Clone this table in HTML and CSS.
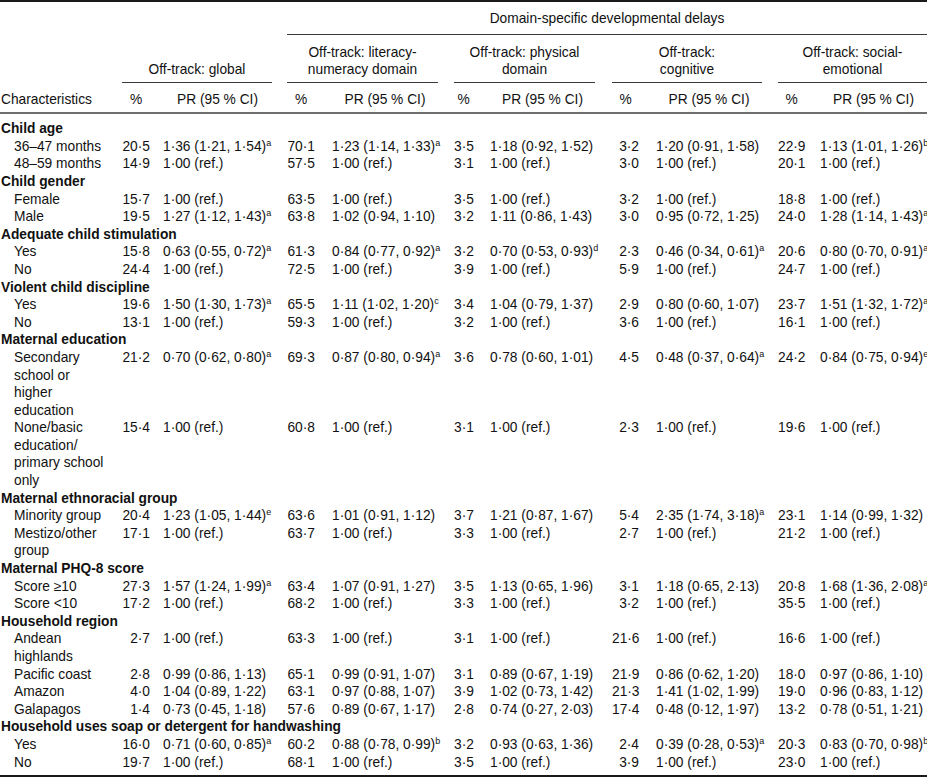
FILE: index.html
```html
<!DOCTYPE html>
<html lang="en">
<head>
<meta charset="utf-8">
<title>Developmental delays table</title>
<link rel="stylesheet" href="styles.css">
</head>
<body>
<table class="data">
  <colgroup>
    <col class="w-char">
    <col class="w-pct">
    <col class="w-pr-g">
    <col class="w-pct-l">
    <col class="w-pr">
    <col class="w-pct-p">
    <col class="w-pr">
    <col class="w-pct">
    <col class="w-pr">
    <col class="w-pct">
    <col class="w-pr-s">
  </colgroup>
  <thead>
    <tr class="row-span">
      <th colspan="3"></th>
      <th colspan="8" class="span-title">Domain-specific developmental delays</th>
    </tr>
    <tr class="row-groups">
      <th></th>
      <th colspan="2" class="grp grp-g"><div class="grp-in">Off-track: global</div></th>
      <th colspan="2" class="grp grp-l"><div class="grp-in">Off-track: literacy-<br>numeracy domain</div></th>
      <th colspan="2" class="grp grp-p"><div class="grp-in">Off-track: physical<br>domain</div></th>
      <th colspan="2" class="grp grp-c"><div class="grp-in">Off-track:<br>cognitive</div></th>
      <th colspan="2" class="grp grp-s"><div class="grp-in">Off-track: social-<br>emotional</div></th>
    </tr>
    <tr class="row-cols">
      <th>Characteristics</th>
      <th>%</th><th>PR (95 % CI)</th>
      <th>%</th><th>PR (95 % CI)</th>
      <th>%</th><th>PR (95 % CI)</th>
      <th>%</th><th>PR (95 % CI)</th>
      <th>%</th><th>PR (95 % CI)</th>
    </tr>
  </thead>
  <tbody>
    <tr class="cat first"><td colspan="11">Child age</td></tr>
    <tr><td>36–47 months</td><td>20·5</td><td>1·36 (1·21, 1·54)<sup>a</sup></td><td>70·1</td><td>1·23 (1·14, 1·33)<sup>a</sup></td><td>3·5</td><td>1·18 (0·92, 1·52)</td><td>3·2</td><td>1·20 (0·91, 1·58)</td><td>22·9</td><td>1·13 (1·01, 1·26)<sup>b</sup></td></tr>
    <tr><td>48–59 months</td><td>14·9</td><td>1·00 (ref.)</td><td>57·5</td><td>1·00 (ref.)</td><td>3·1</td><td>1·00 (ref.)</td><td>3·0</td><td>1·00 (ref.)</td><td>20·1</td><td>1·00 (ref.)</td></tr>
    <tr class="cat"><td colspan="11">Child gender</td></tr>
    <tr><td>Female</td><td>15·7</td><td>1·00 (ref.)</td><td>63·5</td><td>1·00 (ref.)</td><td>3·5</td><td>1·00 (ref.)</td><td>3·2</td><td>1·00 (ref.)</td><td>18·8</td><td>1·00 (ref.)</td></tr>
    <tr><td>Male</td><td>19·5</td><td>1·27 (1·12, 1·43)<sup>a</sup></td><td>63·8</td><td>1·02 (0·94, 1·10)</td><td>3·2</td><td>1·11 (0·86, 1·43)</td><td>3·0</td><td>0·95 (0·72, 1·25)</td><td>24·0</td><td>1·28 (1·14, 1·43)<sup>a</sup></td></tr>
    <tr class="cat"><td colspan="11">Adequate child stimulation</td></tr>
    <tr><td>Yes</td><td>15·8</td><td>0·63 (0·55, 0·72)<sup>a</sup></td><td>61·3</td><td>0·84 (0·77, 0·92)<sup>a</sup></td><td>3·2</td><td>0·70 (0·53, 0·93)<sup>d</sup></td><td>2·3</td><td>0·46 (0·34, 0·61)<sup>a</sup></td><td>20·6</td><td>0·80 (0·70, 0·91)<sup>a</sup></td></tr>
    <tr><td>No</td><td>24·4</td><td>1·00 (ref.)</td><td>72·5</td><td>1·00 (ref.)</td><td>3·9</td><td>1·00 (ref.)</td><td>5·9</td><td>1·00 (ref.)</td><td>24·7</td><td>1·00 (ref.)</td></tr>
    <tr class="cat"><td colspan="11">Violent child discipline</td></tr>
    <tr><td>Yes</td><td>19·6</td><td>1·50 (1·30, 1·73)<sup>a</sup></td><td>65·5</td><td>1·11 (1·02, 1·20)<sup>c</sup></td><td>3·4</td><td>1·04 (0·79, 1·37)</td><td>2·9</td><td>0·80 (0·60, 1·07)</td><td>23·7</td><td>1·51 (1·32, 1·72)<sup>a</sup></td></tr>
    <tr><td>No</td><td>13·1</td><td>1·00 (ref.)</td><td>59·3</td><td>1·00 (ref.)</td><td>3·2</td><td>1·00 (ref.)</td><td>3·6</td><td>1·00 (ref.)</td><td>16·1</td><td>1·00 (ref.)</td></tr>
    <tr class="cat"><td colspan="11">Maternal education</td></tr>
    <tr><td>Secondary school or higher education</td><td>21·2</td><td>0·70 (0·62, 0·80)<sup>a</sup></td><td>69·3</td><td>0·87 (0·80, 0·94)<sup>a</sup></td><td>3·6</td><td>0·78 (0·60, 1·01)</td><td>4·5</td><td>0·48 (0·37, 0·64)<sup>a</sup></td><td>24·2</td><td>0·84 (0·75, 0·94)<sup>e</sup></td></tr>
    <tr><td>None/basic education/<wbr>primary school only</td><td>15·4</td><td>1·00 (ref.)</td><td>60·8</td><td>1·00 (ref.)</td><td>3·1</td><td>1·00 (ref.)</td><td>2·3</td><td>1·00 (ref.)</td><td>19·6</td><td>1·00 (ref.)</td></tr>
    <tr class="cat"><td colspan="11">Maternal ethnoracial group</td></tr>
    <tr><td>Minority group</td><td>20·4</td><td>1·23 (1·05, 1·44)<sup>e</sup></td><td>63·6</td><td>1·01 (0·91, 1·12)</td><td>3·7</td><td>1·21 (0·87, 1·67)</td><td>5·4</td><td>2·35 (1·74, 3·18)<sup>a</sup></td><td>23·1</td><td>1·14 (0·99, 1·32)</td></tr>
    <tr><td>Mestizo/other group</td><td>17·1</td><td>1·00 (ref.)</td><td>63·7</td><td>1·00 (ref.)</td><td>3·3</td><td>1·00 (ref.)</td><td>2·7</td><td>1·00 (ref.)</td><td>21·2</td><td>1·00 (ref.)</td></tr>
    <tr class="cat"><td colspan="11">Maternal PHQ-8 score</td></tr>
    <tr><td>Score ≥10</td><td>27·3</td><td>1·57 (1·24, 1·99)<sup>a</sup></td><td>63·4</td><td>1·07 (0·91, 1·27)</td><td>3·5</td><td>1·13 (0·65, 1·96)</td><td>3·1</td><td>1·18 (0·65, 2·13)</td><td>20·8</td><td>1·68 (1·36, 2·08)<sup>a</sup></td></tr>
    <tr><td>Score &lt;10</td><td>17·2</td><td>1·00 (ref.)</td><td>68·2</td><td>1·00 (ref.)</td><td>3·3</td><td>1·00 (ref.)</td><td>3·2</td><td>1·00 (ref.)</td><td>35·5</td><td>1·00 (ref.)</td></tr>
    <tr class="cat"><td colspan="11">Household region</td></tr>
    <tr><td>Andean highlands</td><td>2·7</td><td>1·00 (ref.)</td><td>63·3</td><td>1·00 (ref.)</td><td>3·1</td><td>1·00 (ref.)</td><td>21·6</td><td>1·00 (ref.)</td><td>16·6</td><td>1·00 (ref.)</td></tr>
    <tr><td>Pacific coast</td><td>2·8</td><td>0·99 (0·86, 1·13)</td><td>65·1</td><td>0·99 (0·91, 1·07)</td><td>3·1</td><td>0·89 (0·67, 1·19)</td><td>21·9</td><td>0·86 (0·62, 1·20)</td><td>18·0</td><td>0·97 (0·86, 1·10)</td></tr>
    <tr><td>Amazon</td><td>4·0</td><td>1·04 (0·89, 1·22)</td><td>63·1</td><td>0·97 (0·88, 1·07)</td><td>3·9</td><td>1·02 (0·73, 1·42)</td><td>21·3</td><td>1·41 (1·02, 1·99)</td><td>19·0</td><td>0·96 (0·83, 1·12)</td></tr>
    <tr><td>Galapagos</td><td>1·4</td><td>0·73 (0·45, 1·18)</td><td>57·6</td><td>0·89 (0·67, 1·17)</td><td>2·8</td><td>0·74 (0·27, 2·03)</td><td>17·4</td><td>0·48 (0·12, 1·97)</td><td>13·2</td><td>0·78 (0·51, 1·21)</td></tr>
    <tr class="cat"><td colspan="11">Household uses soap or detergent for handwashing</td></tr>
    <tr><td>Yes</td><td>16·0</td><td>0·71 (0·60, 0·85)<sup>a</sup></td><td>60·2</td><td>0·88 (0·78, 0·99)<sup>b</sup></td><td>3·2</td><td>0·93 (0·63, 1·36)</td><td>2·4</td><td>0·39 (0·28, 0·53)<sup>a</sup></td><td>20·3</td><td>0·83 (0·70, 0·98)<sup>b</sup></td></tr>
    <tr class="last"><td>No</td><td>19·7</td><td>1·00 (ref.)</td><td>68·1</td><td>1·00 (ref.)</td><td>3·5</td><td>1·00 (ref.)</td><td>3·9</td><td>1·00 (ref.)</td><td>23·0</td><td>1·00 (ref.)</td></tr>
  </tbody>
</table>
</body>
</html>
```

FILE: styles.css
```css
html, body {
  margin: 0;
  padding: 0;
  overflow: hidden;
  background: #fff;
}

body {
  font-family: "Liberation Sans", Arial, sans-serif;
  font-size: 13.75px;
  line-height: 17.6px;
  color: #111;
}

.data {
  width: 927px;
  table-layout: fixed;
  border-collapse: separate;
  border-spacing: 0;
  border-top: 2px solid #1a1a1a;
  border-bottom: 2px solid #1a1a1a;
}

.w-char { width: 122px; }
.w-pct { width: 34px; }
.w-pct-l { width: 35px; }
.w-pct-p { width: 26px; }
.w-pr-g { width: 131px; }
.w-pr { width: 132px; }
.w-pr-s { width: 115px; }

.data th,
.data td {
  padding: 0;
  font-weight: normal;
  text-align: left;
  vertical-align: top;
  white-space: nowrap;
}

/* header row 1 */
.row-span th {
  padding-top: 8px;
  padding-bottom: 6px;
}

.data .span-title {
  text-align: center;
  border-bottom: 1px solid #3a3a3a;
}

/* header row 2: group titles */
.row-groups th {
  padding-top: 9px;
  vertical-align: bottom;
}

.grp-in {
  text-align: center;
  line-height: 17px;
  padding-bottom: 4px;
  border-bottom: 1px solid #3a3a3a;
}

.data .grp-g { padding-right: 15px; }
.data .grp-l { padding-right: 16px; }
.data .grp-p { padding-right: 17px; }
.data .grp-c { padding-right: 16px; }
.data .grp-s { padding-right: 0; }

/* header row 3: column labels */
.row-cols th {
  padding-top: 8px;
  padding-bottom: 4px;
  border-bottom: 2px solid #6e6e6e;
  text-align: center;
}

.data .row-cols th:first-child {
  text-align: left;
  padding-left: 1px;
}

/* percentage columns */
.data td:nth-child(even),
.data .row-cols th:nth-child(even) {
  padding-right: 7px;
}

.data td:nth-child(even) {
  text-align: right;
}

.data td:nth-child(2),
.data .row-cols th:nth-child(2) {
  padding-right: 6px;
}

/* PR columns */
.data td:nth-child(3),
.data .row-cols th:nth-child(3) { padding-left: 7px; }

.data td:nth-child(5),
.data td:nth-child(7),
.data td:nth-child(9),
.data .row-cols th:nth-child(5),
.data .row-cols th:nth-child(7),
.data .row-cols th:nth-child(9) { padding-left: 10px; }

.data td:nth-child(11),
.data .row-cols th:nth-child(11) { padding-left: 8px; }

.data .row-cols th:nth-child(3) { padding-right: 15px; }
.data .row-cols th:nth-child(5) { padding-right: 16px; }
.data .row-cols th:nth-child(7) { padding-right: 17px; }
.data .row-cols th:nth-child(9) { padding-right: 16px; }

/* characteristics column */
.data td:first-child {
  white-space: normal;
  padding-left: 14px;
  padding-right: 15px;
}

.data .cat td {
  font-weight: bold;
  white-space: nowrap;
  padding-left: 1px;
  padding-right: 0;
  text-align: left;
}

.data .first td {
  padding-top: 6px;
}

.data .last td {
  padding-bottom: 4px;
}

sup {
  font-size: 9px;
  line-height: 0;
  vertical-align: 5px;
}
```
